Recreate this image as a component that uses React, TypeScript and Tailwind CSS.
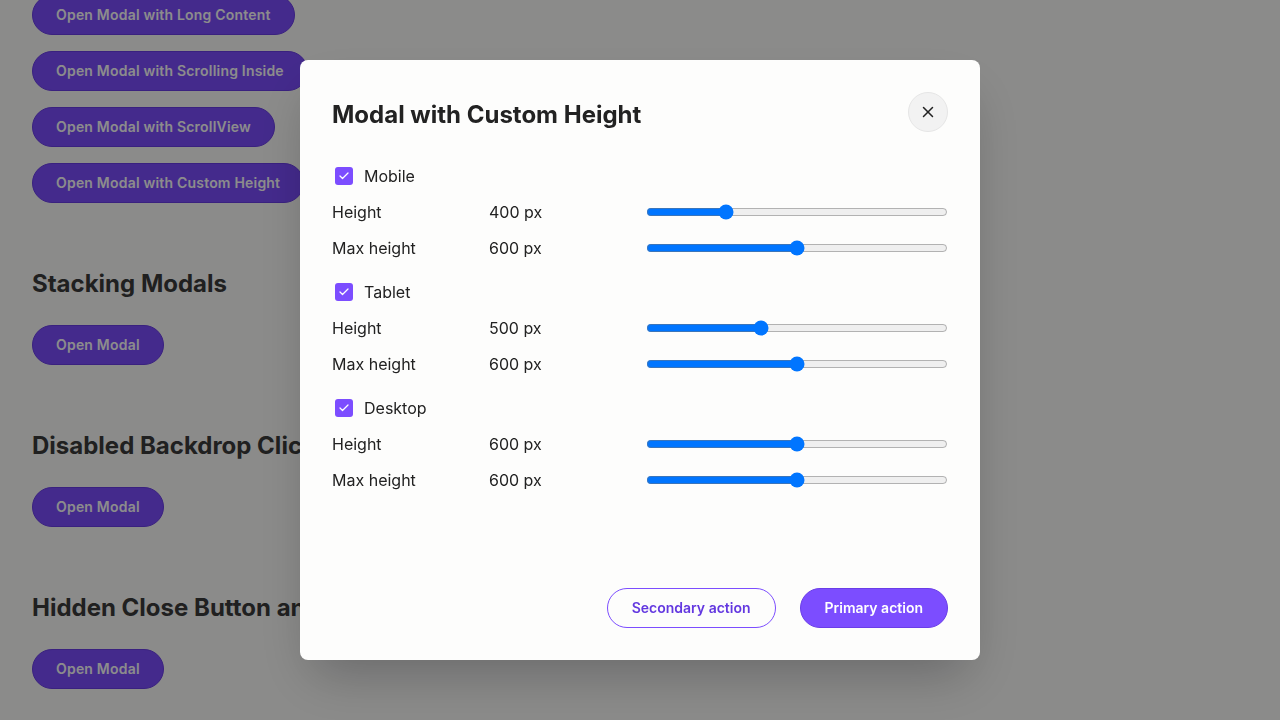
import { Check, X } from "lucide-react";

const groups = [
    { name: "Mobile", height: 400, max: 600 },
    { name: "Tablet", height: 500, max: 600 },
    { name: "Desktop", height: 600, max: 600 },
];

function PageButton({ label }: { label: string }) {
    return (
        <button className="h-10 px-[23px] rounded-full bg-[#7c4dff] border border-[#6a3de8] text-white text-sm font-semibold tracking-[0.2px] whitespace-nowrap">
            {label}
        </button>
    );
}

function SliderRow({ label, value }: { label: string; value: number }) {
    return (
        <div className="h-9 flex items-center text-base text-[#222]">
            <span className="w-[157px]">{label}</span>
            <span className="w-[157px]">{value} px</span>
            <input type="range" min={200} max={1000} defaultValue={value} className="w-[302px] h-4" />
        </div>
    );
}

export default function App() {
    return (
        <div className="relative h-[720px] overflow-hidden bg-[#fdfdfc] font-['Inter',sans-serif]">
            <div className="px-8 -mt-[5px] flex flex-col items-start">
                <div className="flex flex-col items-start gap-4">
                    <PageButton label="Open Modal with Long Content" />
                    <PageButton label="Open Modal with Scrolling Inside" />
                    <PageButton label="Open Modal with ScrollView" />
                    <PageButton label="Open Modal with Custom Height" />
                </div>
                {["Stacking Modals", "Disabled Backdrop Click", "Hidden Close Button and Header"].map((title) => (
                    <section key={title} className="mt-[65px] flex flex-col items-start">
                        <h2 className="text-2xl leading-8 font-bold text-[#3b3b3b] whitespace-nowrap">{title}</h2>
                        <div className="mt-[25px]">
                            <PageButton label="Open Modal" />
                        </div>
                    </section>
                ))}
            </div>

            <div className="fixed inset-0 bg-black/45 flex items-center justify-center">
                <div className="w-[680px] h-[600px] bg-[#fdfdfc] rounded-lg shadow-2xl p-8 flex flex-col">
                    <div className="h-10 flex items-center justify-between">
                        <h1 className="pt-1.5 text-2xl font-bold text-[#222]">Modal with Custom Height</h1>
                        <button className="w-10 h-10 rounded-full bg-[#f2f2f2] border border-[#e6e6e6] flex items-center justify-center text-[#222]">
                            <X size={18} strokeWidth={2} />
                        </button>
                    </div>

                    <div className="mt-[26px] flex flex-col gap-2">
                        {groups.map((g) => (
                            <div key={g.name} className="flex flex-col">
                                <label className="h-9 flex items-center gap-[11px] text-base text-[#222]">
                                    <span className="ml-[3px] w-[18px] h-[18px] rounded-[3px] bg-[#7c4dff] flex items-center justify-center text-white">
                                        <Check size={12} strokeWidth={2.5} />
                                    </span>
                                    {g.name}
                                </label>
                                <SliderRow label="Height" value={g.height} />
                                <SliderRow label="Max height" value={g.max} />
                            </div>
                        ))}
                    </div>

                    <div className="mt-auto flex justify-end gap-6">
                        <button className="h-10 px-6 rounded-full border border-[#7c4dff] text-[#6338e0] text-sm font-semibold">
                            Secondary action
                        </button>
                        <button className="h-10 px-6 rounded-full bg-[#7c4dff] border border-[#6a3de8] text-white text-sm font-semibold">
                            Primary action
                        </button>
                    </div>
                </div>
            </div>
        </div>
    );
}
